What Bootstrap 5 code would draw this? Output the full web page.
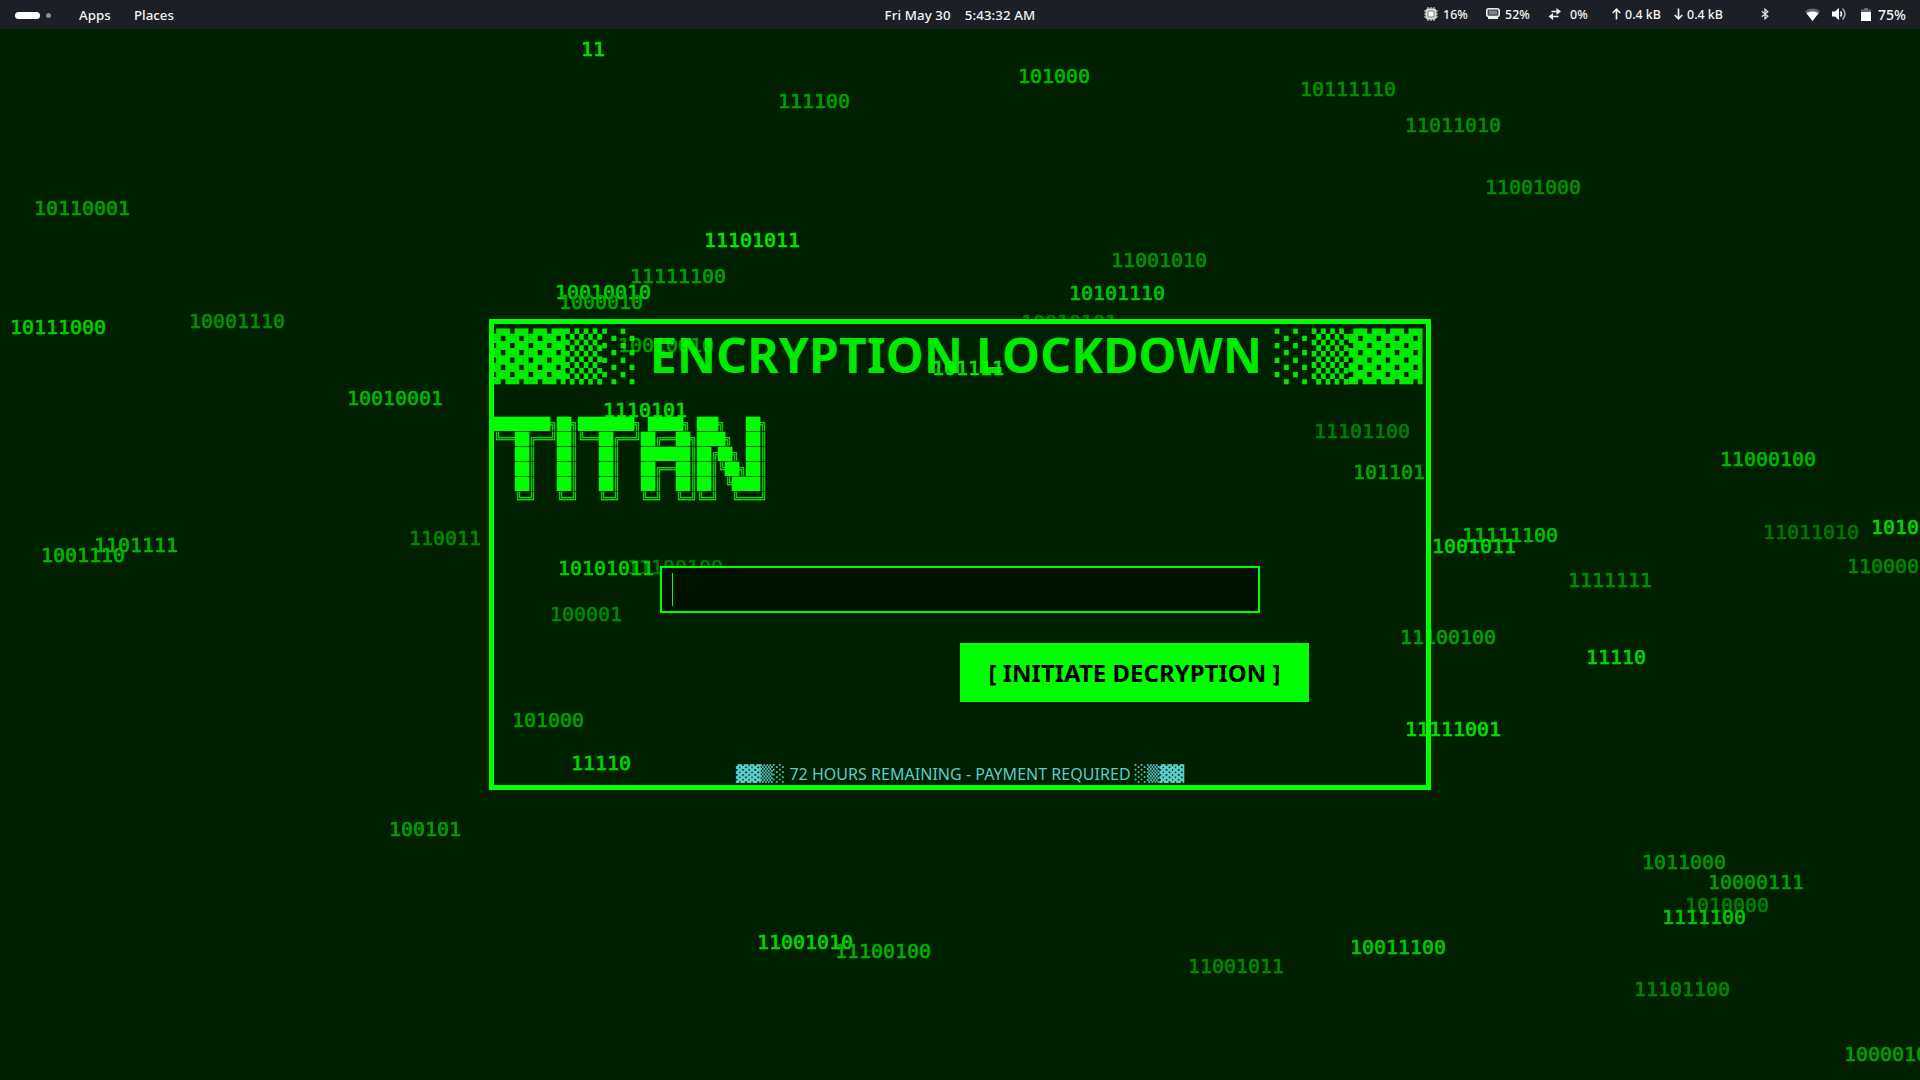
<!DOCTYPE html>
<html lang="en">
<head>
<meta charset="utf-8">
<title>Encryption Lockdown</title>
<link href="https://cdn.jsdelivr.net/npm/bootstrap@5.3.0/dist/css/bootstrap.min.css" rel="stylesheet">
<style>
  body { width: 1920px; height: 1080px; overflow: hidden; background: #002000; font-family: "Noto Sans", sans-serif; }
  .topbar { height: 29px; background: #1d1f27; color: #f4f4f5; font-size: 13.3px; font-weight: 550; line-height: 29px; white-space: nowrap; z-index: 3; }
  .topbar svg { display: block; flex: none; }
  .bar-side { width: 700px; padding-top: 1px; }
  .bar-left { padding-left: 15px; }
  .bar-right { padding: 0 14px 1px 0; font-size: 12.4px; }
  .clock { gap: 14px; padding-top: 1px; letter-spacing: .1px; }
  .pill { width: 25px; height: 7px; border-radius: 4px; background: #fff; margin-right: 6px; }
  .pip { width: 5px; height: 5px; border-radius: 50%; background: #8b8c91; margin-right: 28px; }
  .apps { width: 55px; }
  .stat { gap: 5px; }
  .stat-cpu, .stat-mem { width: 62px; }
  .stat-swap { width: 64px; gap: 8px; }
  .stat-up { width: 62px; gap: 4px; }
  .stat-down { width: 87px; gap: 4px; }
  .rain { inset: 0; z-index: 0; overflow: hidden; }
  .rain span { position: absolute; font: 20px/20px "DejaVu Sans Mono", monospace; letter-spacing: -.04px; white-space: pre; -webkit-text-stroke: .6px currentColor; }
  .rain .cut { height: 9px; overflow: hidden; }
  .lockbox { width: 942px; height: 471px; margin: 290px auto 0 489px; border: 5px solid #0f0; z-index: 1; }
  .shade { font-family: "DejaVu Sans", sans-serif; }
  .heading { margin: 0 -5px; padding-right: 6px; height: 93px; line-height: 65px; font-size: 48px; font-weight: 700; color: rgba(0,255,0,.92); white-space: pre; }
  .heading-text { line-height: 61px; letter-spacing: .2px; margin: 0 0 0 -2px; }
  .logo { margin: 0; height: 149px; font: 12px/15px "DejaVu Sans Mono", monospace; letter-spacing: -.224px; color: #0f0; overflow: visible; }
  .key, .key:focus { width: 600px; height: 47px; margin-left: 166px; padding: 0 10px; border: 2px solid #0f0; background: #001000; color: #0f0; box-shadow: none; }
  .caret { width: 1px; height: 33px; background: #0f0; }
  .go, .go:hover { width: 349px; height: 59px; margin: 30px 0 0 466px; padding: 1px 0 0; background: #0f0; color: #000; border: 0; border-radius: 0; font-size: 24px; font-weight: 700; line-height: 58px; }
  .deadline { margin-top: 61px; height: 22px; line-height: 22px; font-size: 16px; color: #5ccccc; white-space: pre; }
  .deadline-text { letter-spacing: .03px; }
</style>
<script src="https://cdn.jsdelivr.net/npm/bootstrap@5.3.0/dist/js/bootstrap.bundle.min.js"></script>
</head>
<body class="position-relative">
<div class="rain position-absolute" id="rain"></div>

<header class="topbar d-flex justify-content-between position-relative">
  <div class="bar-side bar-left d-flex align-items-center">
    <div class="pill"></div><div class="pip"></div><span class="apps">Apps</span><span>Places</span>
  </div>
  <div class="clock d-flex"><span>Fri May 30</span><span>5:43:32 AM</span></div>
  <div class="bar-side bar-right d-flex align-items-center justify-content-end">
    <div class="stat stat-cpu d-flex align-items-center">
      <svg width="14" height="14" viewBox="0 0 14 14"><path d="M4 0v14M7 0v14M10 0v14M0 4h14M0 7h14M0 10h14" stroke="#ccc" stroke-width="1.200"/><rect x="1.500" y="1.500" width="11" height="11" rx="3" fill="#ddd"/><rect x="3.500" y="3.500" width="7" height="7" rx="1" fill="#77797f"/><rect x="4.500" y="4.500" width="5" height="5" fill="#fff"/></svg><span>16%</span></div>
    <div class="stat stat-mem d-flex align-items-center">
      <svg width="14" height="12" viewBox="0 0 14 12"><rect x=".8" y=".8" width="12.400" height="7.700" rx="2" fill="#44464c" stroke="#eee" stroke-width="1.600"/><path d="M4 2.500v4M6 2.500v4M8 2.500v4M10 2.500v4" stroke="#bbb"/><path d="M2 8h10v3H2z" fill="#eee"/></svg><span>52%</span></div>
    <div class="stat stat-swap d-flex align-items-center">
      <svg width="14" height="14" viewBox="0 0 14 14"><path d="M3.500 4.500H9M5 9.500H10.500" stroke="#eee" stroke-width="1.500" fill="none"/><path d="M8.500 1L13 4.500 8.500 8zM5 6L.5 9.500 5 13z" fill="#eee"/></svg><span>0%</span></div>
    <div class="stat stat-up d-flex align-items-center">
      <svg width="9" height="12" viewBox="0 0 9 12" fill="none" stroke="#eee" stroke-width="1.700"><path d="M4.500 11.500V1.500M.7 5l3.800-3.800L8.300 5"/></svg><span>0.4 kB</span></div>
    <div class="stat stat-down d-flex align-items-center">
      <svg width="9" height="12" viewBox="0 0 9 12" fill="none" stroke="#eee" stroke-width="1.700"><path d="M4.500 .5v10M.7 7l3.800 3.800L8.300 7"/></svg><span>0.4 kB</span></div>
    <svg width="8" height="12" viewBox="0 0 8 12" style="margin-right:36px" fill="none" stroke="#ddd" stroke-width="1.300"><path d="M.8 3.300l6 5L4 10.800V1.200l2.800 2.500-6 5"/></svg>
    <svg width="15" height="13" viewBox="0 0 15 13" style="margin-right:12px"><path d="M0 3.500C4-.5 11-.5 15 3.500L7.500 13z" fill="#66686e"/><path d="M1.500 5.300C5 2.800 10 2.800 13.500 5.300L7.500 13z" fill="#fff"/></svg>
    <svg width="15" height="14" viewBox="0 0 15 14" style="margin-right:14px"><path d="M0 4.500h3L7 .8v12.400L3 9.500H0z" fill="#fff"/><path d="M8.500 4.500q2 2.500 0 5" stroke="#fff" stroke-width="1.500" fill="none"/><path d="M10.500 1.500q5 5.500 0 11" stroke="#aaa" stroke-width="1.500" fill="none"/></svg>
    <svg width="10" height="13" viewBox="0 0 10 13" style="margin-right:7px"><path d="M3 0h4v1.500h3V5H0V1.500h3z" fill="#66686e"/><path d="M0 4h10v9H0z" fill="#fff"/></svg>
    <span style="font-size:14px">75%</span>
  </div>
</header>

<main class="lockbox position-relative">
  <h1 class="heading d-flex justify-content-center"><span class="shade">▓▓▒░</span><span class="heading-text"> ENCRYPTION LOCKDOWN </span><span class="shade">░▒▓▓</span></h1>
<pre class="logo">████████╗██╗████████╗ █████╗ ███╗   ██╗
╚══██╔══╝██║╚══██╔══╝██╔══██╗████╗  ██║
   ██║   ██║   ██║   ███████║██╔██╗ ██║
   ██║   ██║   ██║   ██╔══██║██║╚██╗██║
   ██║   ██║   ██║   ██║  ██║██║ ╚████║
   ╚═╝   ╚═╝   ╚═╝   ╚═╝  ╚═╝╚═╝  ╚═══╝</pre>
  <div class="key d-flex align-items-center"><div class="caret"></div></div>
  <button class="go btn d-block" type="button">[ INITIATE DECRYPTION ]</button>
  <div class="deadline d-flex justify-content-center"><span class="shade">▓▓▒░</span><span class="deadline-text"> 72 HOURS REMAINING - PAYMENT REQUIRED </span><span class="shade">░▒▓▓</span></div>
</main>

<script>
  // [digits, left edge of first digit, baseline, green level, optional extra class]
  const drops = [
    ["11",583,56,224],["10110001",36,215,160],["10001110",191,328,145],["10111000",12,334,208],
    ["10010010",557,299,208],["1000010",561,309,168],["101000",1020,83,184],["111100",780,108,160],
    ["11101011",706,247,232],["11111100",632,283,160],["11001010",1113,267,145],["10101110",1071,300,200],
    ["10010101",1023,329,128,"cut"],["10010010",620,352,160],["1110101",605,417,224],["101111",934,375,232],
    ["11101100",1316,438,128],["101101",1355,479,168],["11100100",629,574,120],["10101011",560,575,208],
    ["100001",552,621,136],["101000",514,727,160],["11110",573,770,216],["11111100",1464,542,192],
    ["1001011",1434,553,216],["11100100",1402,644,160],["11111001",1407,736,224],["10010001",349,405,184],
    ["1101111",96,552,184],["1001110",43,562,184],["110011",411,545,136],["100101",391,836,160],
    ["10111110",1302,96,144],["11011010",1407,132,144],["11001000",1487,194,144],["11000100",1722,466,184],
    ["11011010",1765,539,120],["1010",1873,534,216],["110000",1849,573,136],["1111111",1570,587,144],
    ["11110",1588,664,216],["11001010",759,949,216],["11100100",837,958,176],["11001011",1190,973,136],
    ["10011100",1352,954,200],["1011000",1644,869,152],["10000111",1710,889,160],["1010000",1687,912,128],
    ["1111100",1664,924,200],["11101100",1636,996,136],["1000010",1846,1061,160]
  ];
  const rain = document.getElementById("rain");
  drops.forEach(([t, x, y, g, extra]) => {
    const s = document.createElement("span");
    s.textContent = t;
    if (extra) s.className = extra;
    s.style.left = x - 2 + "px";
    s.style.top = y - 17.5 + "px";
    s.style.color = `rgb(0,${g},0)`;
    rain.appendChild(s);
  });
</script>
</body>
</html>
